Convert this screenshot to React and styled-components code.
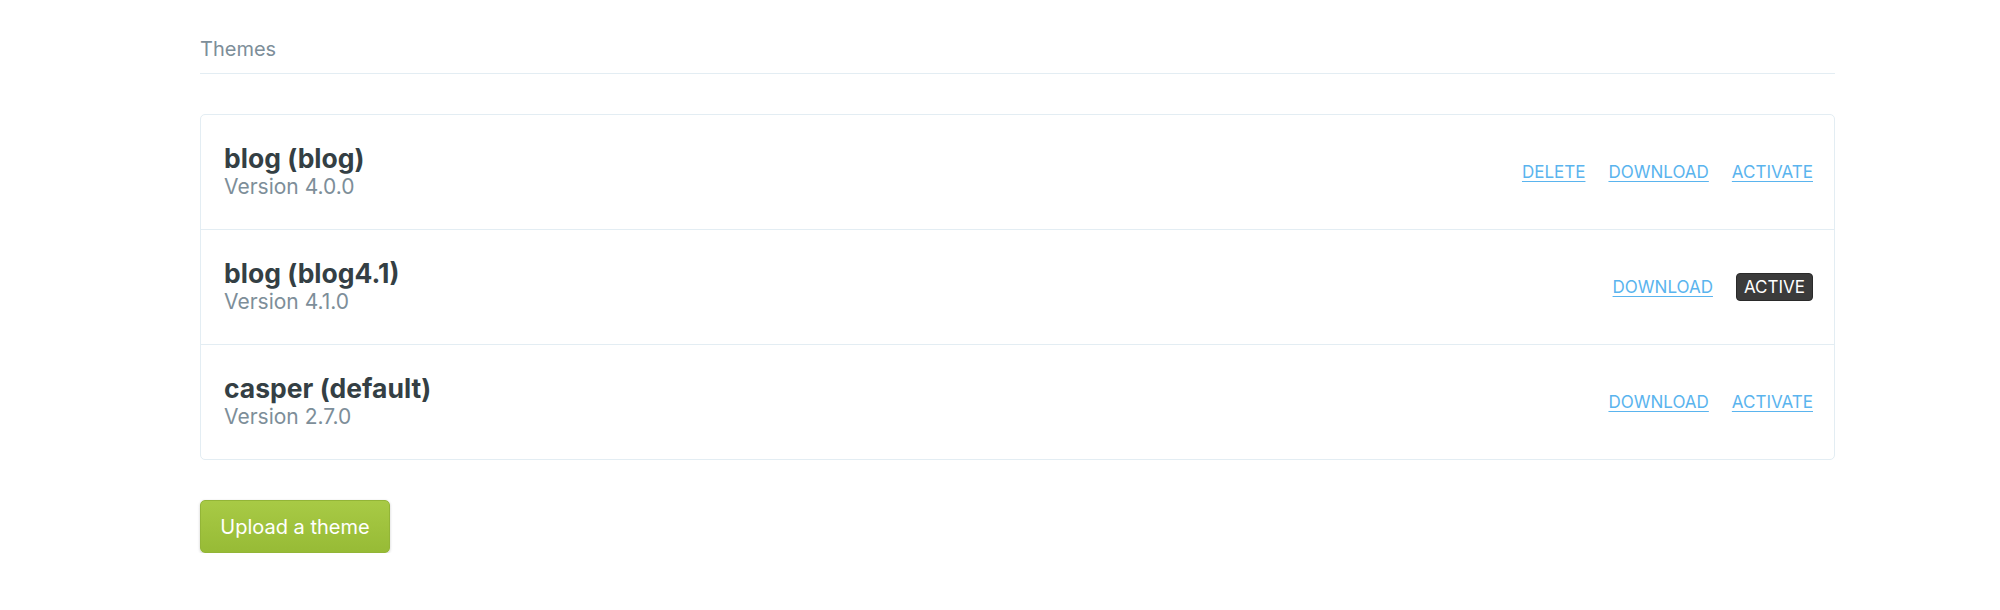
import styled, { createGlobalStyle } from 'styled-components';

const GlobalStyle = createGlobalStyle`
  body {
    margin: 0;
    background: #fff;
    font-family: Inter, "Noto Sans", sans-serif;
  }
`;

const Page = styled.main`
  width: 1635px;
  margin-left: 200px;
  padding-top: 37px;
`;

const Heading = styled.h2`
  margin: 0;
  padding-bottom: 12px;
  font-size: 20px;
  line-height: 24px;
  font-weight: 400;
  color: #7d8e99;
  border-bottom: 1px solid #e3edf3;
`;

const Card = styled.section`
  margin-top: 40px;
  border: 1px solid #e3edf3;
  border-radius: 5px;
`;

const Row = styled.div`
  display: flex;
  align-items: center;
  justify-content: space-between;
  height: 114px;
  padding: 0 21px 0 23px;
  border-top: ${(p) => (p.$first ? 'none' : '1px solid #e3edf3')};
`;

const Title = styled.div`
  font-size: 26.5px;
  line-height: 30px;
  font-weight: 700;
  color: #343f44;
`;

const Version = styled.div`
  font-size: 21px;
  line-height: 28px;
  color: #7d8e99;
`;

const Actions = styled.div`
  display: flex;
  align-items: center;
  gap: 23px;
`;

const Link = styled.a`
  font-size: 17px;
  color: #5ab4ee;
  text-decoration: underline;
  text-underline-offset: 3px;
  text-transform: uppercase;
  cursor: pointer;
`;

const Badge = styled.span`
  display: inline-flex;
  align-items: center;
  height: 28px;
  padding: 0 7px;
  box-sizing: border-box;
  background: #3b3b3b;
  border: 1px solid #2a2a2a;
  border-radius: 4px;
  color: #fff;
  font-size: 17px;
  text-transform: uppercase;
`;

const UploadButton = styled.button`
  margin-top: 40px;
  width: 190px;
  height: 53px;
  border: 1px solid #93b537;
  border-radius: 5px;
  background: linear-gradient(#a8ca45, #97bb36);
  box-shadow: 0 1px 3px rgba(0, 0, 0, 0.2);
  color: #fff;
  font-family: inherit;
  font-size: 20px;
  cursor: pointer;
`;

const themes = [
  { name: 'blog (blog)', version: '4.0.0', actions: ['Delete', 'Download', 'Activate'] },
  { name: 'blog (blog4.1)', version: '4.1.0', actions: ['Download'], active: true },
  { name: 'casper (default)', version: '2.7.0', actions: ['Download', 'Activate'] },
];

export default function App() {
  return (
    <Page>
      <GlobalStyle />
      <Heading>Themes</Heading>
      <Card>
        {themes.map((t, i) => (
          <Row key={t.name} $first={i === 0}>
            <div>
              <Title>{t.name}</Title>
              <Version>Version {t.version}</Version>
            </div>
            <Actions>
              {t.actions.map((a) => (
                <Link key={a}>{a}</Link>
              ))}
              {t.active && <Badge>Active</Badge>}
            </Actions>
          </Row>
        ))}
      </Card>
      <UploadButton>Upload a theme</UploadButton>
    </Page>
  );
}
